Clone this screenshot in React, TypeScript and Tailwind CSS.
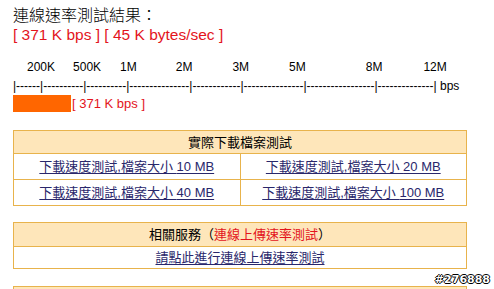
import React from "react";

// Speed scale: label text and the gap before each label
const scaleLabels: { text: string; gap: string }[] = [
  { text: "200K", gap: "ml-[14px]" },
  { text: "500K", gap: "ml-[18px]" },
  { text: "1M", gap: "ml-[19px]" },
  { text: "2M", gap: "ml-[39px]" },
  { text: "3M", gap: "ml-[40px]" },
  { text: "5M", gap: "ml-[40px]" },
  { text: "8M", gap: "ml-[60px]" },
  { text: "12M", gap: "ml-[41px]" },
];

const rulerText =
  "|------|----------|----------|---------------|------------|---------------|-----------------|--------------| bps";

const downloads = [
  ["10 MB", "20 MB"],
  ["40 MB", "100 MB"],
];

const cjk = "font-['Liberation_Sans','Noto_Sans_CJK_TC',sans-serif]";

function DownloadLink({ size }: { size: string }) {
  return (
    <a href="#" className="text-[#29276b] underline underline-offset-2">
      下載速度測試,檔案大小 {size}
    </a>
  );
}

export default function App() {
  return (
    <div className={`relative w-[494px] h-[289px] overflow-hidden bg-white text-black ${cjk}`}>
      <div className="pl-[13px] pt-[7px]">
        {/* result summary */}
        <div className="text-[16px] leading-[18px] font-light">連線速率測試結果：</div>
        <div className="text-[15.5px] leading-[18px] text-[#e3141c] mt-[1px]">
          [ 371 K bps ] [ 45 K bytes/sec ]
        </div>

        {/* scale */}
        <div className="flex text-[12px] leading-[14px] mt-[16px]">
          {scaleLabels.map((l) => (
            <span key={l.text} className={l.gap}>
              {l.text}
            </span>
          ))}
        </div>
        <div className="text-[12px] leading-[14px] mt-[5px] whitespace-pre">{rulerText}</div>

        {/* measured bar */}
        <div className="flex items-center mt-[2px]">
          <div className="w-[58px] h-[17px] bg-[#ff6600]" />
          <span className="ml-[1px] text-[13px] leading-[17px] text-[#e3141c]">[ 371 K bps ]</span>
        </div>

        {/* download tests */}
        <table className="mt-[18px] w-[454px] border-collapse text-[13px]">
          <thead>
            <tr>
              <th
                colSpan={2}
                className="h-[23px] p-0 border border-[#e8b34c] bg-[#fee6ba] font-normal leading-[21px]"
              >
                實際下載檔案測試
              </th>
            </tr>
          </thead>
          <tbody>
            {downloads.map((row) => (
              <tr key={row[0]}>
                {row.map((s) => (
                  <td
                    key={s}
                    className="w-1/2 h-[26px] p-0 border border-[#e8b34c] text-center leading-[24px]"
                  >
                    <DownloadLink size={s} />
                  </td>
                ))}
              </tr>
            ))}
          </tbody>
        </table>

        {/* related services */}
        <table className="mt-[16px] w-[454px] border-collapse text-[13px]">
          <thead>
            <tr>
              <th className="h-[24px] p-0 border border-[#e8b34c] bg-[#fee6ba] font-normal leading-[22px]">
                相關服務（<span className="text-[#e3141c]">連線上傳速率測試</span>）
              </th>
            </tr>
          </thead>
          <tbody>
            <tr>
              <td className="h-[22px] p-0 border border-[#e8b34c] text-center leading-[20px]">
                <a href="#" className="text-[#29276b] underline underline-offset-2">
                  請點此進行連線上傳速率測試
                </a>
              </td>
            </tr>
          </tbody>
        </table>

        <div className="mt-[17px] w-[454px] h-[10px] border border-[#e8b34c] bg-[#fee6ba]" />
      </div>

      <span className="absolute right-[4px] top-[273px] text-[11px] leading-[13px] font-bold text-white font-['DejaVu_Sans',sans-serif] [text-shadow:1px_0_#000,-1px_0_#000,0_1px_#000,0_-1px_#000]">
        #276888
      </span>
    </div>
  );
}
